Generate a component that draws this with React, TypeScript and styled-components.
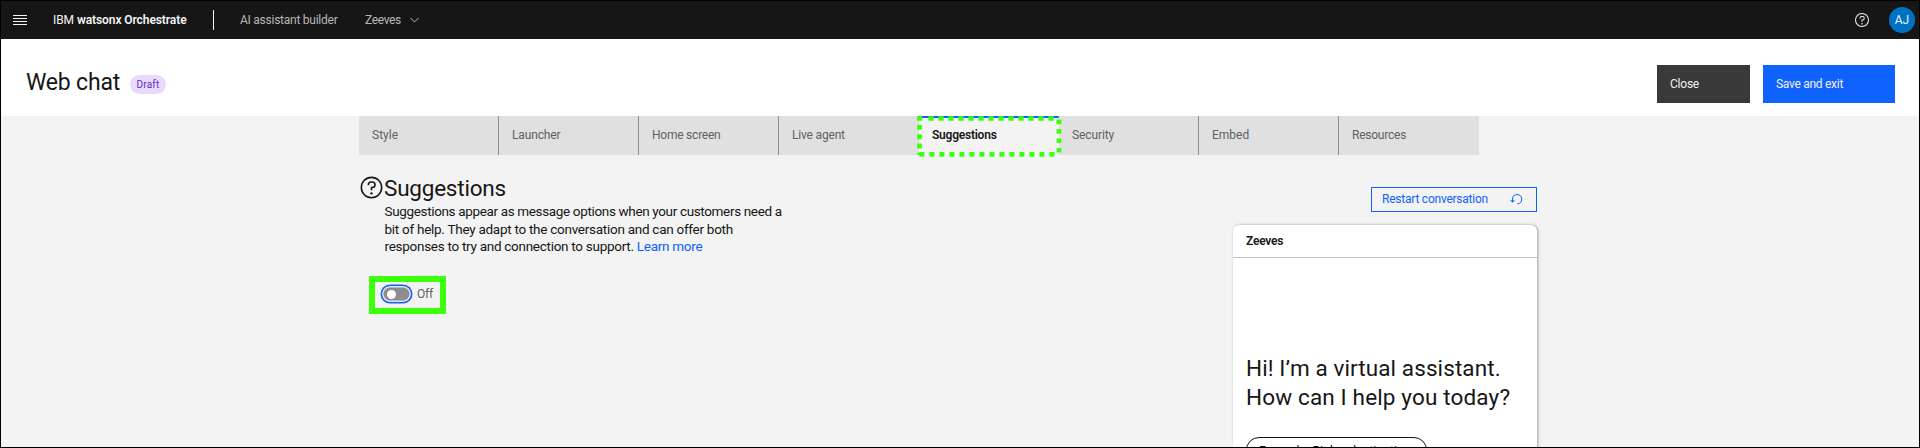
import React from "react";
import styled, { createGlobalStyle } from "styled-components";

const Global = createGlobalStyle`
  *, *::before, *::after { box-sizing: border-box; }
  body { margin: 0; overflow: hidden; font-family: Roboto, "Open Sans", sans-serif; color: #161616; }
  p, h1, h2 { margin: 0; font-weight: 400; }
  button { font: inherit; border: 0; padding: 0; cursor: pointer; }
`;

const Label = styled.span<{ $ls?: number; $weight?: number }>`
  letter-spacing: ${(p) => p.$ls ?? -0.23}px;
  font-weight: ${(p) => p.$weight ?? 400};
  white-space: nowrap;
`;

const Page = styled.div`
  width: 1920px;
  height: 448px;
  overflow: hidden;
  display: flex;
  flex-direction: column;
  background: #f3f3f3;
  border: 1px solid #000;
`;

const TopBar = styled.header`
  flex: 0 0 38px;
  display: flex;
  align-items: center;
  background: #161616;
  color: #f4f4f4;
  font-size: 12px;
  padding: 0 4px 0 12px;
  svg { display: block; }
`;

const Brand = styled.div`
  margin-left: 26px;
  width: 160px;
  white-space: nowrap;
`;

const Divider = styled.div`
  width: 1px;
  height: 20px;
  background: #f4f4f4;
`;

const Product = styled.div`
  margin-left: 26px;
  width: 125px;
  color: #b8b8b8;
`;

const AssistantPicker = styled.div`
  display: flex;
  align-items: center;
  height: 36px;
  padding-bottom: 1px;
  color: #b8b8b8;
  gap: 9px;
`;

const TopActions = styled.div`
  margin-left: auto;
  display: flex;
  align-items: center;
  gap: 19px;
`;

const Avatar = styled.div`
  width: 26px;
  height: 26px;
  border-radius: 50%;
  background: #0072c3;
  display: grid;
  place-items: center;
  color: #e5f6ff;
`;

const TitleBar = styled.section`
  flex: 0 0 77px;
  display: flex;
  align-items: flex-start;
  background: #fff;
  padding: 0 24px 0 25px;
`;

const Title = styled.h1`
  margin-top: 29px;
  width: 104px;
  font-size: 23px;
  line-height: 30px;
  white-space: nowrap;
`;

const Tag = styled.div`
  margin-top: 36px;
  width: 36px;
  height: 19px;
  border-radius: 10px;
  background: #e8daff;
  color: #6929c4;
  font-size: 10px;
  padding-bottom: 1px;
  display: grid;
  place-items: center;
`;

const Buttons = styled.div`
  margin: 26px 0 0 auto;
  display: flex;
  gap: 13px;
`;

const ActionButton = styled.button<{ $width: number; $primary?: boolean }>`
  width: ${(p) => p.$width}px;
  height: 38px;
  padding: 0 0 0 13px;
  text-align: left;
  font-size: 12px;
  color: #f0f0f0;
  background: ${(p) => (p.$primary ? "#0f62fe" : "#393939")};
`;

const Tabs = styled.nav`
  flex: 0 0 39px;
  display: flex;
  margin-left: 358px;
  width: 1120px;
`;

const Tab = styled.div<{ $active?: boolean; $line?: boolean }>`
  position: relative;
  width: 140px;
  height: 39px;
  padding-left: 13px;
  font-size: 12px;
  color: ${(p) => (p.$active ? "#161616" : "#616161")};
  background: ${(p) => (p.$active ? "#f3f3f3" : "#e0e0e0")};
  border-top: ${(p) => (p.$active ? "2px solid #0f62fe" : "0")};
  line-height: ${(p) => (p.$active ? 35 : 39)}px;
  box-shadow: ${(p) => (p.$line ? "inset -1px 0 #8f8f8f" : "none")};
`;

const DashedMarker = styled.svg`
  position: absolute;
  z-index: 1;
  left: -2px;
  top: -3px;
`;

const Content = styled.main`
  flex: 1;
  min-height: 0;
  display: flex;
  justify-content: space-between;
  width: 1178px;
  margin-left: 358px;
`;

const Settings = styled.section`
  padding-top: 17px;
  width: 460px;
`;

const Heading = styled.div`
  display: flex;
  height: 31px;
  align-items: flex-start;
  svg { margin-top: 3px; flex: none; }
`;

const HeadingText = styled.h2`
  margin-top: 2px;
  font-size: 22.5px;
  line-height: 28px;
`;

const Description = styled.p`
  margin-left: 25.5px;
  font-size: 13.5px;
  line-height: 17.6px;
  display: flex;
  flex-direction: column;
`;

const Link = styled.a`
  color: #0f62fe;
`;

const ToggleHighlight = styled.div`
  margin: 20px 0 0 10px;
  width: 77px;
  height: 38px;
  border: 6px solid #3dff0b;
  display: flex;
  align-items: center;
  padding: 0 0 1px 6px;
  gap: 5px;
  font-size: 12px;
  color: #616161;
`;

const Toggle = styled.div`
  width: 31px;
  height: 18px;
  border-radius: 9px;
  border: 1px solid #0f62fe;
  background: #8d8d8d;
  box-shadow: inset 0 0 0 1.5px #dfe6f5, 0 0 0 0.5px #0f62fe;
  display: flex;
  align-items: center;
  padding-left: 5px;
`;

const Knob = styled.div`
  width: 9px;
  height: 9px;
  border-radius: 50%;
  background: #fff;
`;

const Preview = styled.aside`
  width: 305px;
  display: flex;
  flex-direction: column;
  padding-top: 32px;
`;

const Restart = styled.button`
  align-self: flex-end;
  flex: 0 0 25px;
  width: 166px;
  border: 1px solid #0f62fe;
  background: transparent;
  color: #0f62fe;
  font-size: 12px;
  padding: 0 13px 1px 10px;
  display: flex;
  align-items: center;
  justify-content: space-between;
`;

const ChatCard = styled.div`
  margin-top: 13px;
  height: 300px;
  flex: none;
  width: 304px;
  margin-left: 1px;
  background: #fff;
  border-radius: 6px 6px 0 0;
  box-shadow: 1px 0 3px rgba(0, 0, 0, 0.35);
`;

const ChatHeader = styled.div`
  height: 33px;
  border-bottom: 1px solid #c1c1c1;
  padding-left: 13px;
  line-height: 33px;
  font-size: 12px;
`;

const Greeting = styled.p`
  display: flex;
  flex-direction: column;
  padding: 96px 0 0 13px;
  font-size: 22.5px;
  line-height: 29px;
`;

const Suggestion = styled.div`
  margin: 25px 0 0 13px;
  width: 181px;
  height: 26px;
  border: 1px solid #161616;
  border-radius: 13px;
  padding-left: 12px;
  font-size: 12px;
  line-height: 26px;
`;

const tabs: { name: string; ls?: number; active?: boolean; line?: boolean }[] = [
  { name: "Style", ls: 0, line: true },
  { name: "Launcher", ls: -0.15, line: true },
  { name: "Home screen", line: true },
  { name: "Live agent", ls: -0.18 },
  { name: "Suggestions", active: true },
  { name: "Security", ls: -0.1, line: true },
  { name: "Embed", ls: 0, line: true },
  { name: "Resources" },
];

const HelpIcon = ({ size }: { size: number }) => (
  <svg width={size} height={size} viewBox="0 0 32 32" fill="currentColor">
    <path d="M16 2a14 14 0 1 0 14 14A14 14 0 0 0 16 2Zm0 26a12 12 0 1 1 12-12 12 12 0 0 1-12 12Z" />
    <circle cx="16" cy="23.5" r="1.5" />
    <path d="M17 8h-1.5a4.49 4.49 0 0 0-4.5 4.5v.5h2v-.5a2.5 2.5 0 0 1 2.5-2.5H17a2.5 2.5 0 0 1 0 5h-2v4.5h2V17a4.5 4.5 0 0 0 0-9Z" />
  </svg>
);

export default function App() {
  return (
    <Page>
      <Global />
      <TopBar>
        <svg width="14" height="12" viewBox="0 0 14 12" stroke="#f4f4f4" strokeWidth="1">
          <path d="M0 1.5h14M0 4.5h14M0 7.5h14M0 10.5h14" />
        </svg>
        <Brand><Label $ls={-0.08}>IBM </Label><Label $weight={600} $ls={-0.08}>watsonx Orchestrate</Label></Brand>
        <Divider />
        <Product><Label $ls={-0.25}>AI assistant builder</Label></Product>
        <AssistantPicker>
          <Label $ls={-0.35}>Zeeves</Label>
          <svg width="9" height="6" viewBox="0 0 9 6" fill="none" stroke="currentColor"><path d="M.5 1l4 4 4-4" /></svg>
        </AssistantPicker>
        <TopActions>
          <HelpIcon size={16} />
          <Avatar><Label $ls={0}>AJ</Label></Avatar>
        </TopActions>
      </TopBar>
      <TitleBar>
        <Title><Label $ls={-0.2}>Web chat</Label></Title>
        <Tag><Label $ls={0.2}>Draft</Label></Tag>
        <Buttons>
          <ActionButton $width={93}><Label>Close</Label></ActionButton>
          <ActionButton $width={132} $primary><Label $ls={-0.28}>Save and exit</Label></ActionButton>
        </Buttons>
      </TitleBar>
      <Tabs>
        {tabs.map((t) => (
          <Tab key={t.name} $active={t.active} $line={t.line}>
            <Label $ls={t.ls} $weight={t.active ? 600 : 400}>{t.name}</Label>
            {t.active && (
              <DashedMarker width="146" height="46" viewBox="0 0 146 46" fill="none" stroke="#3dff0b" strokeWidth="4.7">
                <path d="M0 3.5H6M11.4 3.5H142" strokeDasharray="5.3 4.7" />
                <path d="M2.5 9.8V40" strokeDasharray="5 4.4" />
                <path d="M142 4.7V39" strokeDasharray="4.6 4.8" />
                <path d="M2.4 39.4H139" strokeDasharray="5 5" />
              </DashedMarker>
            )}
          </Tab>
        ))}
      </Tabs>
      <Content>
        <Settings>
          <Heading>
            <HelpIcon size={25} />
            <HeadingText><Label $ls={-0.22}>Suggestions</Label></HeadingText>
          </Heading>
          <Description>
            <Label $ls={-0.35}>Suggestions appear as message options when your customers need a</Label>
            <Label $ls={-0.27}>bit of help. They adapt to the conversation and can offer both</Label>
            <Label $ls={-0.28}>responses to try and connection to support. <Link>Learn more</Link></Label>
          </Description>
          <ToggleHighlight>
            <Toggle><Knob /></Toggle>
            <Label>Off</Label>
          </ToggleHighlight>
        </Settings>
        <Preview>
          <Restart>
            <Label>Restart conversation</Label>
            <svg width="13" height="12" viewBox="0 0 13 12" fill="none" stroke="currentColor"><path d="M2.5 9V6a4.6 4.6 0 1 1 5 4.8M.5 7l2 2.3 2-2.3" /></svg>
          </Restart>
          <ChatCard>
            <ChatHeader><Label $weight={600}>Zeeves</Label></ChatHeader>
            <Greeting>
              <Label $ls={0.1}>Hi! I’m a virtual assistant.</Label>
              <Label $ls={0.15}>How can I help you today?</Label>
            </Greeting>
            <Suggestion><Label $ls={0.2}>Example: Pick a destination</Label></Suggestion>
          </ChatCard>
        </Preview>
      </Content>
    </Page>
  );
}
